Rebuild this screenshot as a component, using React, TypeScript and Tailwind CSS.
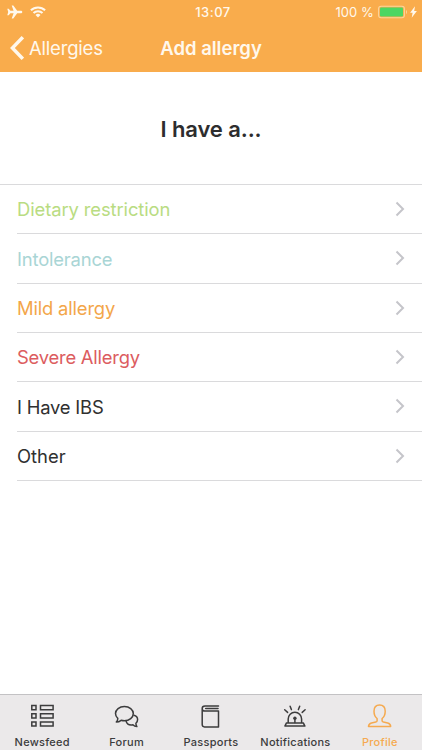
import type { ReactNode } from 'react';

const options = [
  { label: 'Dietary restriction', style: 'text-[#b9dc82] tracking-[-0.1px]' },
  { label: 'Intolerance', style: 'text-[#a9d5d5] tracking-[-0.17px]' },
  { label: 'Mild allergy', style: 'text-[#f3a64a] tracking-[-0.17px]' },
  { label: 'Severe Allergy', style: 'text-[#dc5c60] tracking-[-0.22px]' },
  { label: 'I Have IBS', style: 'text-[#303030] tracking-[-0.2px]' },
  { label: 'Other', style: 'text-[#303030]' },
];

function TabIcon({ children }: { children: ReactNode }) {
  return (
    <svg width="26" height="26" viewBox="0 0 26 26" fill="none" stroke="currentColor" strokeWidth="1.5" strokeLinejoin="round" strokeLinecap="round">
      {children}
    </svg>
  );
}

const tabs = [
  {
    label: 'Newsfeed',
    style: 'text-[#3c3c3d]',
    icon: (
      <TabIcon>
        <path strokeLinejoin="miter" d="M2.8 2.5h4.2v4.2H2.8zM11.5 2.5h12.6v4.2H11.5zM2.8 10.7h4.2v4.2H2.8zM11.5 10.7h12.6v4.2H11.5zM2.8 18.9h4.2v4.2H2.8zM11.5 18.9h12.6v4.2H11.5z" />
      </TabIcon>
    ),
  },
  {
    label: 'Forum',
    style: 'text-[#3c3c3d]',
    icon: (
      <TabIcon>
        <path d="M10.4 3.5c5 0 8.9 3.1 8.9 7.1s-3.9 7.2-8.9 7.2c-1.2 0-2.3-.2-3.3-.5-1.5 1.2-3.2 1.700-4.800 1.700 1-1 1.500-2.300 1.500-3.600-1.400-1.200-2.300-2.900-2.300-4.800 0-4 3.900-7.100 8.900-7.100z" />
        <path d="M19.900 12.200c2.500.6 3.700 2.200 3.700 4.300 0 1.600-.6 2.900-1.700 3.800 0 1.300.3 2.400 1 3.300-1.600-.1-3-.8-4-1.900-3 .6-5.900-.7-6.800-3.500" />
      </TabIcon>
    ),
  },
  {
    label: 'Passports',
    style: 'text-[#3c3c3d]',
    icon: (
      <TabIcon>
        <path d="M20.500 2.900H7C5.200 2.900 4.200 4 4.200 5.400v16.200c0 1.400.9 2.300 2.300 2.300h14V8H7C5.200 8 4.200 6.900 4.200 5.400" />
        <path d="M20 5.500H7.700" />
      </TabIcon>
    ),
  },
  {
    label: 'Notifications',
    style: 'text-[#3c3c3d]',
    icon: (
      <TabIcon>
        <path d="M6.200 19.600v-3.700a6.700 6.700 0 0 1 13.400 0v3.700M4.500 19.900h16.800l1.600 3.200H2.900z" />
        <path d="M12.900 15.500V19.500" />
        <circle cx="12.900" cy="15.200" r="1.700" fill="currentColor" stroke="none" />
        <path d="M2.700 6.800l2.900 2.600M8.100 3.300l1.300 3.300M17.700 3.300l-1.300 3.300M23.100 6.800l-2.900 2.600" />
      </TabIcon>
    ),
  },
  {
    label: 'Profile',
    style: 'text-[#f5aa50]',
    icon: (
      <TabIcon>
        <path d="M12.600 2c3.600 0 5.600 2.500 5.600 6.300 0 3-1.100 5.700-3.100 7.200v2.200c0 .8.500 1.200 1.300 1.400l4.300 1c1.900.5 2.800 1.500 3 3.300H1.500c.2-1.800 1.100-2.800 3-3.300l4.300-1c.8-.2 1.300-.6 1.300-1.400v-2.200C8.100 14 7 11.300 7 8.300 7 4.500 9 2 12.600 2z" />
      </TabIcon>
    ),
  },
];

function StatusBar() {
  return (
    <div className="grid h-6 grid-cols-3 items-center text-[13px] leading-none">
      <div className="flex items-center gap-[7px] pl-[7px]">
        <svg width="16" height="14" viewBox="0 0 16 14" fill="currentColor">
          <path d="M15.300 7c0-.8-.7-1.300-1.600-1.300H10.200L6.300.4H4.700l1.900 5.300H3.400L1.700 3.700H.3L1.200 7 .3 10.300h1.400l1.700-2h3.200l-1.900 5.300h1.600l3.900-5.300h3.500c.9 0 1.600-.5 1.600-1.300z" />
        </svg>
        <svg width="16" height="12" viewBox="0 0 16 12" fill="none" stroke="currentColor" strokeWidth="2">
          <path d="M.9 4.300a10.200 10.200 0 0 1 14.200 0M3.500 7a6.500 6.500 0 0 1 9 0" />
          <path d="M5.500 9a3.700 3.700 0 0 1 5 0L8 11.500z" fill="currentColor" stroke="none" />
        </svg>
      </div>
      <div className="pl-[4px] text-center font-medium tracking-[0.5px]">13:07</div>
      <div className="flex items-center justify-end pr-[5px]">
        <span className="tracking-[0.1px]">100 %</span>
        <svg className="ml-[4px]" width="30" height="14" viewBox="0 0 30 14">
          <rect x=".6" y="1.200" width="25.800" height="11.600" rx="2.500" fill="none" stroke="#fbd59c" strokeWidth="1.100" />
          <rect x="2" y="2.600" width="23" height="8.800" rx="1.200" fill="#4cd662" />
          <path d="M28 5v4c1.400-.6 1.400-3.400 0-4z" fill="#fbd59c" />
        </svg>
        <svg className="ml-[2px]" width="7" height="12" viewBox="0 0 7 12" fill="currentColor">
          <path d="M5 .3L.1 6.800h2.500L1.700 11.700 6.900 4.900H4.200z" />
        </svg>
      </div>
    </div>
  );
}

export default function App() {
  return (
    <div className="flex h-[750px] w-[422px] flex-col overflow-hidden bg-white font-['Inter',sans-serif]">
      <header className="h-[72px] bg-[#f9ac4c] text-[#fff8ec]">
        <StatusBar />
        <div className="grid h-12 grid-cols-[140px_1fr_140px] items-center">
          <button className="flex items-center gap-[5px] pl-[10px] text-[18.5px] tracking-[-0.2px]">
            <svg width="14" height="24" viewBox="0 0 14 24" fill="none" stroke="currentColor" strokeWidth="3.4">
              <path d="M12.800 1.200L2.400 12l10.400 10.800" />
            </svg>
            <span className="pt-[2px]">Allergies</span>
          </button>
          <h1 className="pt-[2px] text-center text-[18.5px] font-semibold whitespace-nowrap">Add allergy</h1>
        </div>
      </header>

      <main className="flex-1">
        <h2 className="flex h-28 items-center justify-center pt-[2px] text-[22px] font-semibold tracking-[-0.1px] text-[#2d2d2e]">I have a...</h2>
        <ul className="border-t border-[#dadadc]">
          {options.map((option) => (
            <li key={option.label} className="ml-[17px] flex h-[49.33px] items-center justify-between border-b border-[#dadadc] pr-[17px]">
              <span className={`pt-[2px] text-[18.4px] ${option.style}`}>{option.label}</span>
              <svg width="10" height="16" viewBox="0 0 10 16" fill="none" stroke="#c5c5ca" strokeWidth="2">
                <path d="M1.500 1.500L8 8l-6.500 6.500" />
              </svg>
            </li>
          ))}
        </ul>
      </main>

      <nav className="grid h-14 grid-cols-5 border-t border-[#c3c2c4] bg-[#ebe9ea]">
        {tabs.map((tab) => (
          <button key={tab.label} className={`flex flex-col items-center pt-2 ${tab.style}`}>
            {tab.icon}
            <span className="mt-[6px] text-[11px] leading-[14px] font-medium tracking-[0.25px]">{tab.label}</span>
          </button>
        ))}
      </nav>
    </div>
  );
}
